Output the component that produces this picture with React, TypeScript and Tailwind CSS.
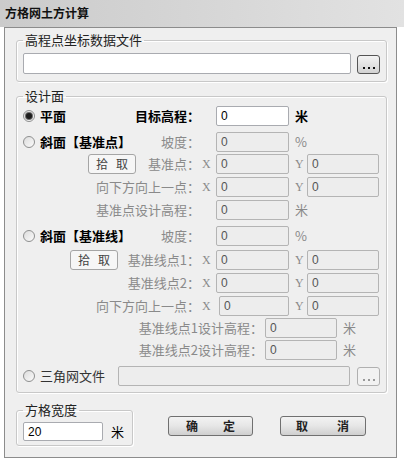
import React from 'react';

const FONT = '"Noto Sans CJK SC", "Noto Sans", sans-serif';

// 单选按钮
const Radio = ({ checked }: { checked?: boolean }) => (
  <span className="flex h-[12px] w-[12px] shrink-0 items-center justify-center rounded-full border border-[#8e8f8f] bg-gradient-to-br from-[#dcdcdc] to-[#fbfbfb]">
    {checked && <span className="h-[6px] w-[6px] rounded-full bg-[#1c1c1c] shadow-[0_0_0_1px_#6a6a6a]" />}
  </span>
);

// 输入框
const Field = ({ value = '0', w, enabled, h = 'h-[20px]' }: { value?: string; w: string; enabled?: boolean; h?: string }) => (
  <input
    readOnly
    defaultValue={value}
    className={`${w} ${h} shrink-0 rounded-[2px] border pl-[4px] text-[12px] outline-none ${
      enabled ? 'border-[#a9abb0] bg-white text-black' : 'border-[#b4b4b4] bg-[#ededed] text-[#555]'
    }`}
    style={{ fontFamily: '"Liberation Sans", sans-serif' }}
  />
);

const Dots = ({ enabled }: { enabled?: boolean }) => (
  <button
    className={`flex h-[19px] w-[23px] shrink-0 items-end justify-center gap-[3px] rounded-[3px] border pb-[4px] ${
      enabled
        ? 'border-[#555] bg-gradient-to-b from-[#f4f4f4] to-[#d2d2d2]'
        : 'border-[#b0b0b0] bg-[#f2f2f2]'
    }`}
  >
    {[0, 1, 2].map((i) => (
      <span key={i} className={`h-[2px] w-[2px] ${enabled ? 'bg-[#111]' : 'bg-[#999]'}`} />
    ))}
  </button>
);

const PickButton = () => (
  <button className="flex h-[20px] w-[48px] shrink-0 items-center justify-center gap-[8px] rounded-[3px] border border-[#a5a5a5] bg-[#f6f6f6] text-[12px] text-[#444]">
    <span>拾</span>
    <span>取</span>
  </button>
);

const Group = ({ title, className, children }: { title: string; className: string; children: React.ReactNode }) => (
  <fieldset className={`rounded-[3px] border border-[#c8c8c8] shadow-[inset_1px_1px_0_#fff,1px_1px_0_#fff] ${className}`}>
    <legend className="ml-[6px] px-[2px] text-[13px] leading-[16px] text-[#222]">{title}</legend>
    {children}
  </fieldset>
);

const Gray = ({ children }: { children: React.ReactNode }) => <span className="text-[#8a8a8a]">{children}</span>;
const XY = ({ t, w = 'w-[16px]' }: { t?: string; w?: string }) => (
  <span className={`${w} shrink-0 pl-[2px] text-[12px] text-[#8a8a8a]`} style={{ fontFamily: '"Liberation Serif", serif' }}>
    {t}
  </span>
);
const YSlot = () => (
  <span className="w-[18px] shrink-0 pl-[6px] text-[12px] text-[#8a8a8a]" style={{ fontFamily: '"Liberation Serif", serif' }}>
    Y
  </span>
);
const Unit = ({ t, bold }: { t: string; bold?: boolean }) => (
  <span className={`pl-[6px] text-[13px] ${bold ? 'font-bold text-black' : 'text-[#8a8a8a]'}`}>{t}</span>
);

export default function App() {
  return (
    <div className="h-[464px] w-[404px] overflow-hidden bg-white text-[13px] leading-[16px]" style={{ fontFamily: FONT }}>
      {/* 标题栏 */}
      <div className="flex h-[27px] items-center bg-gradient-to-r from-[#cbcbcb] via-[#d6d6d6] to-[#e2e2e2] pl-[5px] pb-[1px] text-[12px] font-bold text-[#111]">
        方格网土方计算
      </div>

      <div className="ml-[4px] flex h-[431px] w-[393px] flex-col border border-[#8c8c8c] bg-[#efefef] pl-[11px]">
        {/* 高程点坐标数据文件 */}
        <Group title="高程点坐标数据文件" className="mt-[4px] w-[371px]">
          <div className="mt-[5px] flex items-end pb-[7px] pl-[6px]">
            <Field value="" w="w-[328px]" h="h-[21px]" enabled />
            <span className="ml-[6px]">
              <Dots enabled />
            </span>
          </div>
        </Group>

        {/* 设计面 */}
        <Group title="设计面" className="mt-[6px] w-[371px]">
          <div className="flex flex-col pb-[6px] pl-[6px]">
            <div className="mt-[2px] flex h-[20px] items-center">
              <div className="flex w-[177px] items-center justify-between font-bold text-black">
                <span className="flex items-center gap-[5px]">
                  <Radio checked />
                  平面
                </span>
                <span>目标高程：</span>
              </div>
              <XY />
              <Field w="w-[73px]" enabled />
              <Unit t="米" bold />
            </div>

            <div className="mt-[6px] flex h-[20px] items-center">
              <div className="flex w-[177px] items-center justify-between">
                <span className="flex items-center gap-[5px] font-bold text-black">
                  <Radio />
                  斜面【基准点】
                </span>
                <Gray>坡度：</Gray>
              </div>
              <XY />
              <Field w="w-[73px]" />
              <Unit t="%" />
            </div>

            <div className="mt-[2px] flex h-[20px] items-center">
              <div className="flex w-[177px] items-center">
                <span className="ml-[65px]">
                  <PickButton />
                </span>
                <span className="flex-1 text-right">
                  <Gray>基准点：</Gray>
                </span>
              </div>
              <XY t="X" />
              <Field w="w-[73px]" />
              <YSlot />
              <Field w="w-[72px]" />
            </div>

            <div className="mt-[3px] flex h-[20px] items-center">
              <div className="w-[177px] text-right">
                <Gray>向下方向上一点：</Gray>
              </div>
              <XY t="X" />
              <Field w="w-[73px]" />
              <YSlot />
              <Field w="w-[72px]" />
            </div>

            <div className="mt-[3px] flex h-[20px] items-center">
              <div className="w-[177px] text-right">
                <Gray>基准点设计高程：</Gray>
              </div>
              <XY />
              <Field w="w-[73px]" />
              <Unit t="米" />
            </div>

            <div className="mt-[6px] flex h-[20px] items-center">
              <div className="flex w-[177px] items-center justify-between">
                <span className="flex items-center gap-[5px] font-bold text-black">
                  <Radio />
                  斜面【基准线】
                </span>
                <Gray>坡度：</Gray>
              </div>
              <XY />
              <Field w="w-[73px]" />
              <Unit t="%" />
            </div>

            <div className="mt-[4px] flex h-[20px] items-center">
              <div className="flex w-[177px] items-center">
                <span className="ml-[47px]">
                  <PickButton />
                </span>
                <span className="flex-1 text-right">
                  <Gray>基准线点1：</Gray>
                </span>
              </div>
              <XY t="X" />
              <Field w="w-[73px]" />
              <YSlot />
              <Field w="w-[72px]" />
            </div>

            <div className="mt-[3px] flex h-[20px] items-center">
              <div className="w-[177px] text-right">
                <Gray>基准线点2：</Gray>
              </div>
              <XY t="X" />
              <Field w="w-[73px]" />
              <YSlot />
              <Field w="w-[72px]" />
            </div>

            <div className="mt-[3px] flex h-[20px] items-center">
              <div className="w-[177px] text-right">
                <Gray>向下方向上一点：</Gray>
              </div>
              <XY t="X" w="w-[19px]" />
              <Field w="w-[70px]" />
              <YSlot />
              <Field w="w-[72px]" />
            </div>

            <div className="mt-[2px] flex h-[20px] items-center">
              <div className="w-[240px] text-right">
                <Gray>基准线点1设计高程：</Gray>
              </div>
              <span className="w-[2px]" />
              <Field w="w-[72px]" />
              <Unit t="米" />
            </div>

            <div className="mt-[2px] flex h-[20px] items-center">
              <div className="w-[240px] text-right">
                <Gray>基准线点2设计高程：</Gray>
              </div>
              <span className="w-[2px]" />
              <Field w="w-[72px]" />
              <Unit t="米" />
            </div>

            <div className="mt-[6px] flex h-[20px] items-center">
              <span className="flex w-[95px] items-center gap-[5px] text-[#333]">
                <Radio />
                三角网文件
              </span>
              <Field value="" w="w-[232px]" />
              <span className="ml-[7px]">
                <Dots />
              </span>
            </div>
          </div>
        </Group>

        {/* 底部 */}
        <div className="mt-[9px] flex items-start">
          <Group title="方格宽度" className="w-[117px]">
            <div className="mt-[4px] flex items-center pb-[4px] pl-[6px]">
              <Field value="20" w="w-[80px]" h="h-[19px]" enabled />
              <span className="ml-[8px] text-black">米</span>
            </div>
          </Group>
          <button className="ml-[35px] mt-[14px] flex h-[20px] w-[85px] items-center justify-between rounded-[3px] border border-[#707070] bg-gradient-to-b from-[#f3f3f3] via-[#e6e6e6] to-[#cfcfcf] px-[17px] text-[12px] font-bold text-[#222]">
            <span>确</span>
            <span>定</span>
          </button>
          <button className="ml-[27px] mt-[14px] flex h-[20px] w-[86px] items-center justify-between rounded-[3px] border border-[#707070] bg-gradient-to-b from-[#f3f3f3] via-[#e6e6e6] to-[#cfcfcf] pl-[15px] pr-[16px] text-[12px] font-bold text-[#222]">
            <span>取</span>
            <span>消</span>
          </button>
        </div>
      </div>
    </div>
  );
}
